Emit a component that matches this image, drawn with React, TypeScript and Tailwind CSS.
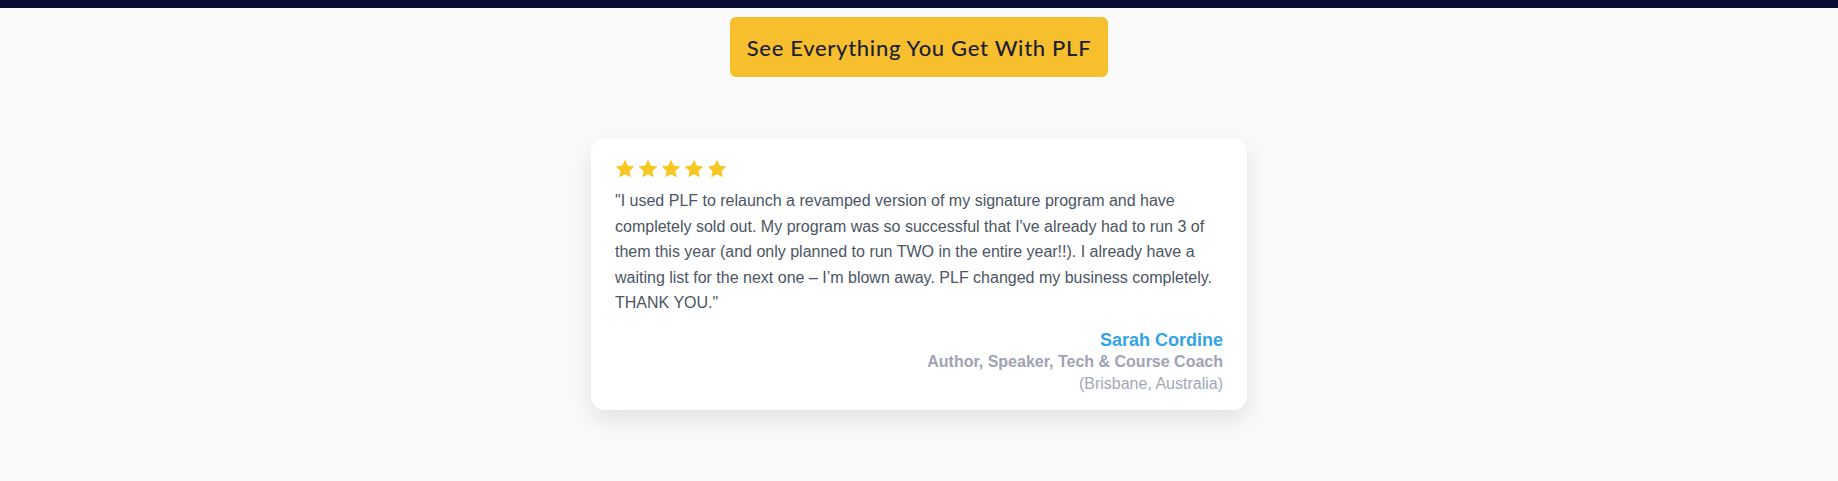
import React from "react";

const Star = () => (
  <svg viewBox="0 0 24 23" className="w-[20px] h-[19px]" fill="#f8c822">
    <path d="M12 0.8l3.4 7.1 7.8 1.1-5.7 5.4 1.4 7.7L12 18.4l-6.9 3.7 1.4-7.7L0.8 9l7.8-1.1z" />
  </svg>
);

export default function App() {
  return (
    <div className="min-h-screen h-[481px] bg-[#fafafa] flex flex-col items-center">
      <div className="w-full h-[8px] bg-[#0b0d33]" />
      <a
        href="#"
        className="mt-[9px] w-[378px] h-[60px] rounded-[6px] bg-[#f7bf2e] flex items-center justify-center text-[#1d2134] text-[22px] tracking-[0.7px]"
        style={{ fontFamily: "Lato, 'Noto Sans', sans-serif", fontWeight: 500 }}
      >
        See Everything You Get With PLF
      </a>
      <div
        className="mt-[61px] w-[656px] bg-white rounded-[14px] shadow-[0_10px_24px_rgba(0,0,0,0.10)] px-[24px] pt-[20px] pb-[15px]"
        style={{ fontFamily: "'Liberation Sans', Arial, sans-serif" }}
      >
        <div className="flex gap-[3px] h-[20px] items-center">
          <Star />
          <Star />
          <Star />
          <Star />
          <Star />
        </div>
        <p className="mt-[10px] text-[16px] leading-[25.6px] text-[#4b5563]">
          "I used PLF to relaunch a revamped version of my signature program and have completely sold out. My program was so successful that I've already had to run 3 of them this year (and only planned to run TWO in the entire year!!). I already have a waiting list for the next one – I’m blown away. PLF changed my business completely. THANK YOU."
        </p>
        <div className="mt-[13px] text-right">
          <div className="text-[18px] leading-[22px] font-bold text-[#32a4e6]">Sarah Cordine</div>
          <div className="text-[16px] leading-[22px] font-bold text-[#9fa3b3]">Author, Speaker, Tech &amp; Course Coach</div>
          <div className="text-[16px] leading-[22px] text-[#a3a7b5]">(Brisbane, Australia)</div>
        </div>
      </div>
    </div>
  );
}
